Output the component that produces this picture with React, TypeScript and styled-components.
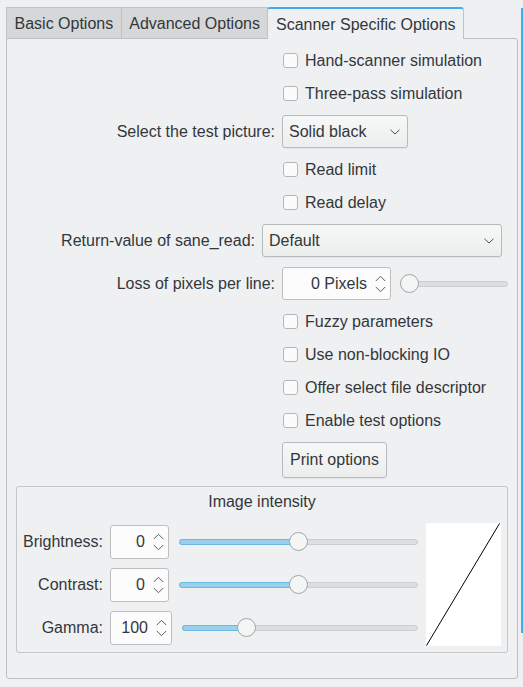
import React from 'react';
import styled, { createGlobalStyle } from 'styled-components';

const GlobalStyle = createGlobalStyle`
  html, body {
    margin: 0;
    padding: 0;
    background: #eff0f1;
  }
  body {
    font-family: 'Liberation Sans', Arial, sans-serif;
    font-size: 16px;
    color: #33373b;
  }
`;

const Window = styled.div`
  width: 523px;
  height: 687px;
  box-sizing: border-box;
  padding: 7px 0 0 6px;
  display: flex;
  align-items: flex-start;
`;

const Main = styled.div`
  width: 512px;
  display: flex;
  flex-direction: column;
`;

const FocusStrip = styled.div`
  width: 2px;
  height: 625px;
  margin: 1px 0 0 3px;
  background: #3daee9;
`;

const TabBar = styled.div`
  display: flex;
  height: 32px;
  position: relative;
  z-index: 1;
  margin-bottom: -1px;
`;

const Tab = styled.div<{ $active?: boolean }>`
  box-sizing: border-box;
  height: ${(p) => (p.$active ? '32px' : '31px')};
  padding: 1px 7.5px 0 7.5px;
  display: flex;
  align-items: center;
  white-space: nowrap;
  background: ${(p) => (p.$active ? '#eff0f1' : '#d5d7d9')};
  border: 1px solid #c0c2c4;
  border-bottom: none;
  border-top: ${(p) => (p.$active ? '2px solid #3daee9' : '1px solid #c0c2c4')};
  border-radius: ${(p) => (p.$active ? '3px 3px 0 0' : '0')};
  & + & {
    margin-left: -1px;
  }
`;

const Panel = styled.div`
  border: 1px solid #bcbec0;
  border-radius: 0 3px 3px 3px;
  padding: 10px 9px 25px 9px;
  background: #eff0f1;
`;

const Form = styled.div`
  display: flex;
  flex-direction: column;
  gap: 10px;
`;

const CheckRow = styled.label`
  height: 23px;
  display: flex;
  align-items: center;
  gap: 7px;
  padding-left: 267px;
  white-space: nowrap;
`;

const CheckBox = styled.span`
  width: 15px;
  height: 15px;
  box-sizing: border-box;
  border: 1px solid #b4b6b8;
  border-radius: 3px;
  background: #fbfbfc;
`;

const FieldRow = styled.div`
  height: 33px;
  display: flex;
  align-items: center;
  gap: 7px;
`;

const FieldLabel = styled.span<{ $width: number }>`
  width: ${(p) => p.$width}px;
  text-align: right;
  white-space: nowrap;
  flex-shrink: 0;
`;

const Combo = styled.div<{ $width: number }>`
  width: ${(p) => p.$width}px;
  height: 33px;
  box-sizing: border-box;
  padding: 0 7px 0 6px;
  display: flex;
  align-items: center;
  justify-content: space-between;
  border: 1px solid #b8babc;
  border-radius: 3px;
  background: linear-gradient(#f6f7f7, #eceded);
  box-shadow: 0 1px 1px rgba(0, 0, 0, 0.05);
  flex-shrink: 0;
`;

const SpinBox = styled.div<{ $width: number; $height?: number }>`
  width: ${(p) => p.$width}px;
  height: ${(p) => p.$height ?? 34}px;
  box-sizing: border-box;
  padding: 0 4px 0 8px;
  display: flex;
  align-items: center;
  justify-content: flex-end;
  gap: 8px;
  border: 1px solid #bcbec0;
  border-radius: 3px;
  background: #fcfcfc;
  flex-shrink: 0;
`;

const Button = styled.div`
  align-self: flex-start;
  margin-left: 266px;
  height: 36px;
  box-sizing: border-box;
  padding: 0 7px;
  display: flex;
  align-items: center;
  border: 1px solid #b8babc;
  border-radius: 3px;
  background: linear-gradient(#f6f7f7, #eceded);
  box-shadow: 0 1px 1px rgba(0, 0, 0, 0.05);
`;

const SliderTrack = styled.div<{ $gap: number }>`
  position: relative;
  flex: 1;
  height: 20px;
  margin-left: ${(p) => p.$gap}px;
`;

const Groove = styled.div`
  position: absolute;
  left: 0;
  right: 0;
  top: 7px;
  height: 6px;
  box-sizing: border-box;
  border: 1px solid #cbcdcf;
  border-radius: 3px;
  background: #dcdee0;
`;

const GrooveFill = styled.div`
  position: absolute;
  left: 0;
  top: 7px;
  height: 6px;
  box-sizing: border-box;
  border: 1px solid #6cb8e0;
  border-radius: 3px;
  background: #9bd0ec;
`;

const Thumb = styled.div`
  position: absolute;
  top: 0;
  width: 19px;
  height: 19px;
  box-sizing: border-box;
  border: 1px solid #a2a4a6;
  border-radius: 50%;
  background: #f4f5f5;
`;

const GroupBox = styled.div`
  margin-top: 8px;
  border: 1px solid #c4c6c8;
  border-radius: 3px;
  padding: 4px 6px 6px 6px;
`;

const GroupTitle = styled.div`
  height: 22px;
  line-height: 22px;
  text-align: center;
`;

const GroupBody = styled.div`
  margin-top: 10px;
  display: flex;
  align-items: center;
  gap: 8px;
`;

const IntensityRows = styled.div`
  flex: 1;
  display: flex;
  flex-direction: column;
  gap: 9px;
`;

const IntensityRow = styled.div`
  display: flex;
  align-items: center;
  gap: 7px;
`;

const Preview = styled.svg`
  width: 75px;
  height: 123px;
  display: block;
  background: #ffffff;
  flex-shrink: 0;
`;

const ChevronDown = () => (
  <svg width="10" height="6" viewBox="0 0 10 6">
    <path d="M0.5 0.8 L5 5 L9.5 0.8" fill="none" stroke="#4d5154" strokeWidth="1" />
  </svg>
);

const SpinArrows = () => (
  <svg width="11" height="18" viewBox="0 0 11 18">
    <path d="M0.8 6 L5.5 1.3 L10.2 6" fill="none" stroke="#5a5e61" strokeWidth="1" />
    <path d="M0.8 12 L5.5 16.7 L10.2 12" fill="none" stroke="#5a5e61" strokeWidth="1" />
  </svg>
);

const Slider = ({ pct, filled, gap }: { pct: number; filled?: boolean; gap: number }) => {
  const [w, setW] = React.useState(0);
  const ref = React.useRef<HTMLDivElement>(null);
  React.useLayoutEffect(() => {
    if (ref.current) setW(ref.current.offsetWidth);
  }, []);
  const center = 9.5 + pct * (w - 19);
  return (
    <SliderTrack $gap={gap} ref={ref}>
      <Groove />
      {filled && <GrooveFill style={{ width: center }} />}
      <Thumb style={{ left: center - 9.5 }} />
    </SliderTrack>
  );
};

const Check = ({ label }: { label: string }) => (
  <CheckRow>
    <CheckBox />
    {label}
  </CheckRow>
);

const intensity = [
  { label: 'Brightness:', value: '0', spin: 59, pct: 0.5 },
  { label: 'Contrast:', value: '0', spin: 59, pct: 0.5 },
  { label: 'Gamma:', value: '100', spin: 62, pct: 0.254 },
];

const App = () => {
  return (
    <>
      <GlobalStyle />
      <Window>
        <Main>
          <TabBar>
            <Tab>Basic Options</Tab>
            <Tab>Advanced Options</Tab>
            <Tab $active>Scanner Specific Options</Tab>
          </TabBar>
          <Panel>
            <Form>
              <Check label="Hand-scanner simulation" />
              <Check label="Three-pass simulation" />
              <FieldRow>
                <FieldLabel $width={259}>Select the test picture:</FieldLabel>
                <Combo $width={126}>
                  Solid black
                  <ChevronDown />
                </Combo>
              </FieldRow>
              <Check label="Read limit" />
              <Check label="Read delay" />
              <FieldRow>
                <FieldLabel $width={239}>Return-value of sane_read:</FieldLabel>
                <Combo $width={240}>
                  Default
                  <ChevronDown />
                </Combo>
              </FieldRow>
              <FieldRow>
                <FieldLabel $width={259}>Loss of pixels per line:</FieldLabel>
                <SpinBox $width={109} $height={33}>
                  0 Pixels
                  <SpinArrows />
                </SpinBox>
                <Slider pct={0} gap={2} />
              </FieldRow>
              <Check label="Fuzzy parameters" />
              <Check label="Use non-blocking IO" />
              <Check label="Offer select file descriptor" />
              <Check label="Enable test options" />
              <Button>Print options</Button>
            </Form>
            <GroupBox>
              <GroupTitle>Image intensity</GroupTitle>
              <GroupBody>
                <IntensityRows>
                  {intensity.map((row) => (
                    <IntensityRow key={row.label}>
                      <FieldLabel $width={80}>{row.label}</FieldLabel>
                      <SpinBox $width={row.spin}>
                        {row.value}
                        <SpinArrows />
                      </SpinBox>
                      <Slider pct={row.pct} filled gap={3} />
                    </IntensityRow>
                  ))}
                </IntensityRows>
                <Preview viewBox="0 0 75 123">
                  <line x1="0.5" y1="122.5" x2="73.5" y2="0.5" stroke="#000" strokeWidth="1" />
                </Preview>
              </GroupBody>
            </GroupBox>
          </Panel>
        </Main>
        <FocusStrip />
      </Window>
    </>
  );
};

export default App;
